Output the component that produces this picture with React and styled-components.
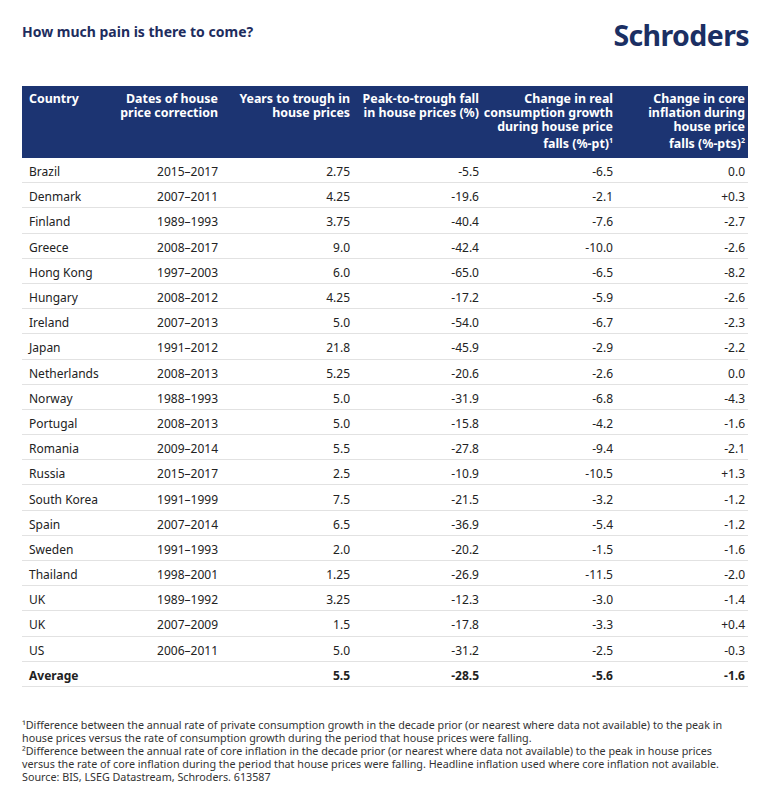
import React from 'react';
import styled, { createGlobalStyle } from 'styled-components';

const rows = [
  ['Brazil', '2015–2017', '2.75', '-5.5', '-6.5', '0.0'],
  ['Denmark', '2007–2011', '4.25', '-19.6', '-2.1', '+0.3'],
  ['Finland', '1989–1993', '3.75', '-40.4', '-7.6', '-2.7'],
  ['Greece', '2008–2017', '9.0', '-42.4', '-10.0', '-2.6'],
  ['Hong Kong', '1997–2003', '6.0', '-65.0', '-6.5', '-8.2'],
  ['Hungary', '2008–2012', '4.25', '-17.2', '-5.9', '-2.6'],
  ['Ireland', '2007–2013', '5.0', '-54.0', '-6.7', '-2.3'],
  ['Japan', '1991–2012', '21.8', '-45.9', '-2.9', '-2.2'],
  ['Netherlands', '2008–2013', '5.25', '-20.6', '-2.6', '0.0'],
  ['Norway', '1988–1993', '5.0', '-31.9', '-6.8', '-4.3'],
  ['Portugal', '2008–2013', '5.0', '-15.8', '-4.2', '-1.6'],
  ['Romania', '2009–2014', '5.5', '-27.8', '-9.4', '-2.1'],
  ['Russia', '2015–2017', '2.5', '-10.9', '-10.5', '+1.3'],
  ['South Korea', '1991–1999', '7.5', '-21.5', '-3.2', '-1.2'],
  ['Spain', '2007–2014', '6.5', '-36.9', '-5.4', '-1.2'],
  ['Sweden', '1991–1993', '2.0', '-20.2', '-1.5', '-1.6'],
  ['Thailand', '1998–2001', '1.25', '-26.9', '-11.5', '-2.0'],
  ['UK', '1989–1992', '3.25', '-12.3', '-3.0', '-1.4'],
  ['UK', '2007–2009', '1.5', '-17.8', '-3.3', '+0.4'],
  ['US', '2006–2011', '5.0', '-31.2', '-2.5', '-0.3'],
];

const average = ['Average', '', '5.5', '-28.5', '-5.6', '-1.6'];

const GlobalStyle = createGlobalStyle`
  body {
    margin: 0;
    background: #fff;
    font-family: "Noto Sans", "Open Sans", sans-serif;
  }
`;

const Page = styled.div`
  width: 770px;
  height: 804px;
  padding: 0 22px;
  box-sizing: border-box;
`;

const TopBar = styled.div`
  display: flex;
  justify-content: space-between;
  align-items: flex-start;
  padding-top: 21px;
  height: 86px;
  box-sizing: border-box;
`;

const Title = styled.h1`
  margin: 2px 0 0;
  font-size: 14px;
  font-weight: 700;
  color: #1e2d5e;
  line-height: 18px;
`;

const Logo = styled.div`
  font-size: 28.5px;
  font-weight: 700;
  color: #1b2f63;
  letter-spacing: -0.6px;
  line-height: 28px;
  margin-right: -1px;
`;

const Table = styled.table`
  width: 100%;
  border-collapse: collapse;
  table-layout: fixed;
  font-size: 12px;
  color: #222;
`;

const Th = styled.th`
  background: #1c3472;
  color: #fff;
  font-weight: 700;
  font-size: 12.4px;
  line-height: 14px;
  vertical-align: top;
  text-align: ${p => (p.$left ? 'left' : 'right')};
  padding: 6px ${p => p.$pr || 4}px 0 ${p => (p.$left ? 7 : 0)}px;
  height: 72px;
  box-sizing: border-box;
`;

const Td = styled.td`
  text-align: ${p => (p.$left ? 'left' : 'right')};
  padding: 3px ${p => p.$pr || 4}px 0 ${p => (p.$left ? 7 : 0)}px;
  height: 21.2px;
  border-bottom: 1px solid #e2e2e2;
  font-weight: ${p => (p.$bold ? 700 : 400)};
  white-space: nowrap;
`;

const Notes = styled.div`
  margin-top: 32px;
  font-size: 10.75px;
  line-height: 13px;
  color: #333;
  white-space: nowrap;
`;

const cols = [78, 122, 132, 129, 134, 131];
const pads = [0, 4, 4, 4, 4, 3];

const Row = ({ cells, bold }) => (
  <tr>
    {cells.map((c, i) => (
      <Td key={i} $left={i === 0} $pr={pads[i]} $bold={bold}>{c}</Td>
    ))}
  </tr>
);

export default function App() {
  return (
    <Page>
      <GlobalStyle />
      <TopBar>
        <Title>How much pain is there to come?</Title>
        <Logo>Schroders</Logo>
      </TopBar>
      <Table>
        <colgroup>
          {cols.map((w, i) => <col key={i} style={{ width: w }} />)}
        </colgroup>
        <thead>
          <tr>
            <Th $left>Country</Th>
            <Th>Dates of house<br />price correction</Th>
            <Th>Years to trough in<br />house prices</Th>
            <Th>Peak-to-trough fall<br />in house prices (%)</Th>
            <Th>Change in real<br />consumption growth<br />during house price<br />falls (%-pt)<sup style={{ fontSize: 7 }}>1</sup></Th>
            <Th $pr={3}>Change in core<br />inflation during<br />house price<br />falls (%-pts)<sup style={{ fontSize: 7 }}>2</sup></Th>
          </tr>
        </thead>
        <tbody>
          {rows.map((r, i) => <Row key={i} cells={r} />)}
          <Row cells={average} bold />
        </tbody>
      </Table>
      <Notes>
        ¹Difference between the annual rate of private consumption growth in the decade prior (or nearest where data not available) to the peak in<br />
        house prices versus the rate of consumption growth during the period that house prices were falling.<br />
        ²Difference between the annual rate of core inflation in the decade prior (or nearest where data not available) to the peak in house prices<br />
        versus the rate of core inflation during the period that house prices were falling. Headline inflation used where core inflation not available.<br />
        Source: BIS, LSEG Datastream, Schroders. 613587
      </Notes>
    </Page>
  );
}
